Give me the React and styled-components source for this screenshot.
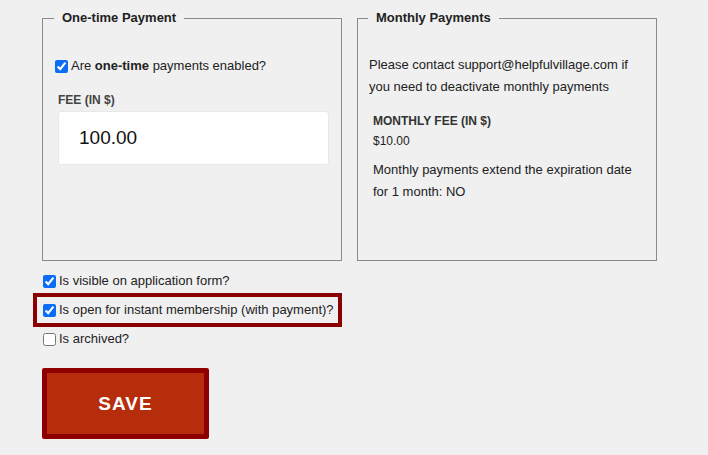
import styled, { createGlobalStyle } from "styled-components";

const GlobalStyle = createGlobalStyle`
  body {
    margin: 0;
    background: #f0f0f0;
    font-family: "Liberation Sans", Arial, sans-serif;
    color: #222;
  }
`;

const Page = styled.div`
  padding: 10px 0 0 42px;
`;

const Panels = styled.div`
  display: flex;
  gap: 15px;
`;

const Panel = styled.fieldset`
  box-sizing: border-box;
  width: 300px;
  height: 251px;
  margin: 0;
  padding: 0 ${(p) => p.$padRight || 12}px 0 ${(p) => p.$padLeft || 12}px;
  border: 1px solid #8a8a8a;
`;

const Legend = styled.legend`
  margin-left: -1px;
  padding: 0 8px;
  font-size: 13px;
  font-weight: bold;
  line-height: 16px;
  color: #222;
`;

const Check = styled.input.attrs({ type: "checkbox" })`
  width: 13px;
  height: 13px;
  margin: 0;
  accent-color: #0b6cf5;
`;

const CheckRow = styled.label`
  display: flex;
  align-items: center;
  gap: 3px;
  font-size: 13px;
  line-height: 16px;
  margin-top: ${(p) => p.$top || 0}px;
`;

const FieldLabel = styled.div`
  margin-top: 19px;
  padding-left: 3px;
  font-size: 12px;
  font-weight: bold;
  line-height: 14px;
  color: #444;
`;

const FeeInput = styled.input`
  box-sizing: border-box;
  display: block;
  width: 271px;
  height: 54px;
  margin: 4px 0 0 3px;
  padding: 0 20px;
  border: 1px solid #e8e8e8;
  border-radius: 3px;
  background: #fff;
  font-family: "Liberation Sans", Arial, sans-serif;
  font-size: 19px;
  color: #111;
  outline: none;
`;

const Note = styled.p`
  margin: ${(p) => p.$top || 0}px 0 0 ${(p) => p.$indent || 0}px;
  font-size: 13px;
  line-height: 22px;
`;

const InfoLabel = styled.div`
  margin: 13px 0 0 4px;
  font-size: 12px;
  font-weight: bold;
  line-height: 20px;
  color: #333;
`;

const InfoValue = styled.div`
  margin-left: 4px;
  font-size: 12px;
  line-height: 20px;
`;

const Options = styled.div`
  display: flex;
  flex-direction: column;
  align-items: flex-start;
  gap: 4px;
  margin: 12px 0 0 1px;
`;

const Highlight = styled.div`
  margin-left: -10px;
  padding: 5px 4px 5px 6px;
  border: 4px solid #8b0000;
`;

const SaveButton = styled.button`
  box-sizing: border-box;
  display: block;
  width: 167px;
  height: 71px;
  margin-top: 21px;
  border: 5px solid #8e0000;
  border-radius: 2px;
  background: #b62d0b;
  color: #fff;
  font-family: "Liberation Sans", Arial, sans-serif;
  font-size: 19px;
  font-weight: bold;
  letter-spacing: 1px;
  cursor: pointer;
`;

const App = () => {
  return (
    <Page>
      <GlobalStyle />
      <Panels>
        <Panel $padLeft={12} $padRight={12}>
          <Legend>One-time Payment</Legend>
          <CheckRow $top={32}>
            <Check defaultChecked />
            <span>
              Are <b>one-time</b> payments enabled?
            </span>
          </CheckRow>
          <FieldLabel>FEE (IN $)</FieldLabel>
          <FeeInput defaultValue="100.00" />
        </Panel>
        <Panel $padLeft={11} $padRight={11}>
          <Legend>Monthly Payments</Legend>
          <Note $top={28}>
            Please contact support@helpfulvillage.com if you need to deactivate
            monthly payments
          </Note>
          <InfoLabel>MONTHLY FEE (IN $)</InfoLabel>
          <InfoValue>$10.00</InfoValue>
          <Note $top={8} $indent={4}>
            Monthly payments extend the expiration date for 1 month: NO
          </Note>
        </Panel>
      </Panels>
      <Options>
        <CheckRow>
          <Check defaultChecked />
          <span>Is visible on application form?</span>
        </CheckRow>
        <Highlight>
          <CheckRow>
            <Check defaultChecked />
            <span>Is open for instant membership (with payment)?</span>
          </CheckRow>
        </Highlight>
        <CheckRow>
          <Check />
          <span>Is archived?</span>
        </CheckRow>
      </Options>
      <SaveButton>SAVE</SaveButton>
    </Page>
  );
};

export default App;
